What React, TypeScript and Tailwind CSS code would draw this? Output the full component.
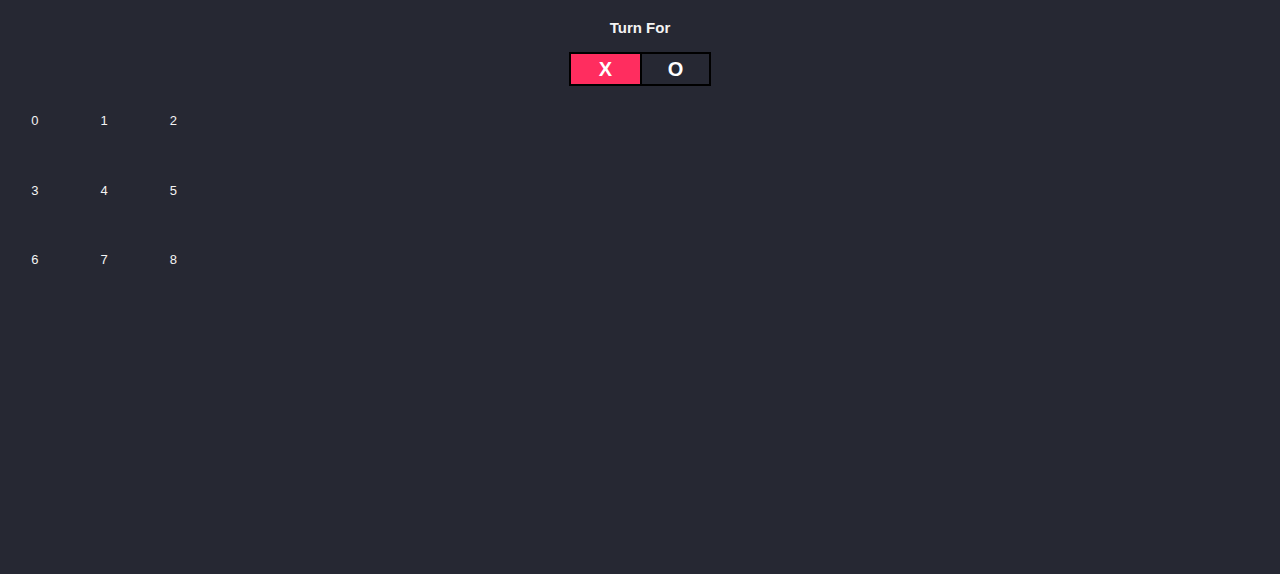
import React from "react";

export default function App() {
  const cells = [0, 1, 2, 3, 4, 5, 6, 7, 8];
  return (
    <div
      className="min-h-[574px] w-full bg-[#262833] text-white"
      style={{ fontFamily: '"Liberation Sans", Arial, sans-serif' }}
    >
      <div className="flex flex-col items-center pt-[19px]">
        <div className="text-[15px] font-bold leading-[18px] text-[#f4f4f4]">Turn For</div>
        <div className="mt-[15px] flex h-[34px] border-2 border-black">
          <div className="flex w-[71px] items-center justify-center border-r-2 border-black bg-[#ff2d5f] text-[20px] font-bold">
            X
          </div>
          <div className="flex w-[67px] items-center justify-center bg-[#262833] text-[20px] font-bold">
            O
          </div>
        </div>
      </div>
      <div className="grid w-[208px] grid-cols-3">
        {cells.map((c) => (
          <div
            key={c}
            className="flex h-[69.5px] w-[69.5px] items-center justify-center text-[13px] text-[#f4f4f4]"
          >
            {c}
          </div>
        ))}
      </div>
    </div>
  );
}
